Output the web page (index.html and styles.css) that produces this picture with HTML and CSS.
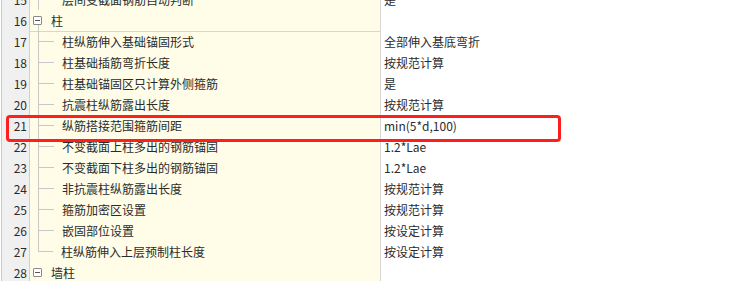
FILE: index.html
```html
<!DOCTYPE html>
<html lang="zh-CN">
<head>
<meta charset="utf-8">
<title>柱 设置</title>
<link rel="stylesheet" href="styles.css">
</head>
<body>
<div class="page">
  <div class="table">
    <div class="row">
      <div class="num">15</div>
      <div class="name"><span class="guide"></span><span class="label">层间变截面钢筋自动判断</span></div>
      <div class="val">是</div>
    </div>
    <div class="row">
      <div class="num">16</div>
      <div class="name group"><span class="toggle"></span><span class="glabel">柱</span></div>
      <div class="val"></div>
    </div>
    <div class="row">
      <div class="num">17</div>
      <div class="name"><span class="guide"></span><span class="label">柱纵筋伸入基础锚固形式</span></div>
      <div class="val">全部伸入基底弯折</div>
    </div>
    <div class="row">
      <div class="num">18</div>
      <div class="name"><span class="guide"></span><span class="label">柱基础插筋弯折长度</span></div>
      <div class="val">按规范计算</div>
    </div>
    <div class="row">
      <div class="num">19</div>
      <div class="name"><span class="guide"></span><span class="label">柱基础锚固区只计算外侧箍筋</span></div>
      <div class="val">是</div>
    </div>
    <div class="row">
      <div class="num">20</div>
      <div class="name"><span class="guide"></span><span class="label">抗震柱纵筋露出长度</span></div>
      <div class="val">按规范计算</div>
    </div>
    <div class="row">
      <div class="num">21</div>
      <div class="name"><span class="guide"></span><span class="label">纵筋搭接范围箍筋间距</span></div>
      <div class="val">min(5*d,100)</div>
    </div>
    <div class="row">
      <div class="num">22</div>
      <div class="name"><span class="guide"></span><span class="label">不变截面上柱多出的钢筋锚固</span></div>
      <div class="val">1.2*Lae</div>
    </div>
    <div class="row">
      <div class="num">23</div>
      <div class="name"><span class="guide"></span><span class="label">不变截面下柱多出的钢筋锚固</span></div>
      <div class="val">1.2*Lae</div>
    </div>
    <div class="row">
      <div class="num">24</div>
      <div class="name"><span class="guide"></span><span class="label">非抗震柱纵筋露出长度</span></div>
      <div class="val">按规范计算</div>
    </div>
    <div class="row">
      <div class="num">25</div>
      <div class="name"><span class="guide"></span><span class="label">箍筋加密区设置</span></div>
      <div class="val">按规范计算</div>
    </div>
    <div class="row">
      <div class="num">26</div>
      <div class="name"><span class="guide"></span><span class="label">嵌固部位设置</span></div>
      <div class="val">按设定计算</div>
    </div>
    <div class="row">
      <div class="num">27</div>
      <div class="name"><span class="guide last"></span><span class="label">柱纵筋伸入上层预制柱长度</span></div>
      <div class="val">按设定计算</div>
    </div>
    <div class="row">
      <div class="num">28</div>
      <div class="name group"><span class="toggle"></span><span class="glabel">墙柱</span></div>
      <div class="val"></div>
    </div>
  </div>
  <div class="highlight"></div>
</div>
</body>
</html>
```

FILE: styles.css
```css
html, body {
  margin: 0;
  padding: 0;
  background: #ffffff;
}

body {
  font-family: "Noto Sans CJK SC", "Noto Sans", sans-serif;
  font-size: 12px;
  color: #2b2b2b;
  overflow: hidden;
}

.page {
  position: relative;
  width: 731px;
  height: 281px;
  overflow: hidden;
}

.table {
  margin-top: -11px;
  margin-left: 1px;
  border-left: 1px solid #c9c9c9;
  display: flex;
  flex-direction: column;
}

.row {
  display: grid;
  grid-template-columns: 28px 351px 1fr;
  height: 21px;
}

.num {
  background: #f0f0f0;
  border-right: 1px solid #d0d0d0;
  border-bottom: 1px solid #d0d0d0;
  text-align: right;
  padding-right: 2px;
  line-height: 21px;
}

.name {
  background: #fffde7;
  border-right: 1px solid #d6d6d6;
  border-bottom: 1px solid #d6d6d6;
  display: flex;
  align-items: stretch;
  line-height: 21px;
  white-space: nowrap;
}

.val {
  background: #ffffff;
  border-bottom: 1px solid #d6d6d6;
  padding-left: 3px;
  line-height: 21px;
  white-space: nowrap;
}

.guide {
  position: relative;
  width: 16px;
  margin-left: 8px;
  margin-bottom: -1px;
  border-left: 1px solid #c8c8c8;
  flex: none;
}

.guide::after {
  content: "";
  position: absolute;
  left: 0;
  top: 10px;
  width: 15px;
  border-top: 1px solid #c8c8c8;
}

.guide.last {
  border-left: none;
  margin-left: 9px;
  width: 15px;
}

.guide.last::before {
  content: "";
  position: absolute;
  left: -1px;
  top: 0;
  height: 10px;
  border-left: 1px solid #c8c8c8;
}

.guide.last::after {
  left: -1px;
}

.label {
  margin-left: 7px;
}

.group {
  position: relative;
  align-items: center;
}

.toggle {
  position: relative;
  width: 7px;
  height: 7px;
  margin-left: 3px;
  border: 1px solid #8a8a8a;
  border-radius: 1px;
  background: #ffffff;
  flex: none;
}

.toggle::after {
  content: "";
  position: absolute;
  left: 1px;
  top: 3px;
  width: 5px;
  border-top: 1px solid #555555;
}

.row:nth-child(2) .group::after {
  content: "";
  position: absolute;
  left: 8px;
  top: 15px;
  height: 6px;
  border-left: 1px solid #c8c8c8;
}

.glabel {
  margin-left: 9px;
}

.highlight {
  position: absolute;
  left: 6px;
  top: 115px;
  width: 549px;
  height: 21px;
  border: 3px solid #ff1e1e;
  border-radius: 4px;
}
```
